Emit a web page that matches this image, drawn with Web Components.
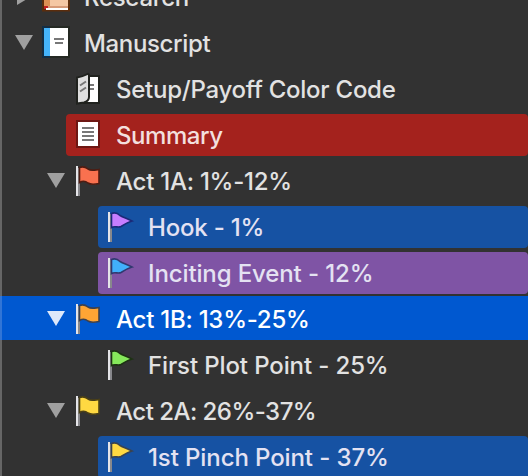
<!DOCTYPE html>
<html lang="en">
<head>
<meta charset="utf-8">
<title>Binder</title>
<style>
html, body { margin: 0; height: 100%; overflow: hidden; background: #323232; }
</style>
</head>
<body>
<binder-tree>
  <binder-item depth="0" state="closed" icon="research" spacing="-0.3">Research</binder-item>
  <binder-item depth="0" state="open" icon="manuscript" spacing="-0.35">Manuscript</binder-item>
  <binder-item depth="1" icon="folded" spacing="-0.25">Setup/Payoff Color Code</binder-item>
  <binder-item depth="1" icon="text" tint="#a4221d" spacing="-0.45">Summary</binder-item>
  <binder-item depth="1" state="open" icon="flag" color="#f9714f" edge="#4e1c12" spacing="-0.25">Act 1A: 1%-12%</binder-item>
  <binder-item depth="2" icon="pennant" color="#c77dff" edge="#1b2a78" tint="#1652a3" spacing="-0.2">Hook - 1%</binder-item>
  <binder-item depth="2" icon="pennant" color="#41b0fb" edge="#31396f" tint="#7f54a5" spacing="-0.12">Inciting Event - 12%</binder-item>
  <binder-item depth="1" state="open" icon="flag" color="#ffa534" edge="#3b4150" selected spacing="-0.25">Act 1B: 13%-25%</binder-item>
  <binder-item depth="2" icon="pennant" color="#86e95b" edge="#1d3213" spacing="-0.12">First Plot Point - 25%</binder-item>
  <binder-item depth="1" state="open" icon="flag" color="#ffd942" edge="#4b4016" spacing="-0.52">Act 2A: 26%-37%</binder-item>
  <binder-item depth="2" icon="pennant" color="#ffd942" edge="#3a4350" tint="#1652a3" spacing="-0.1">1st Pinch Point - 37%</binder-item>
</binder-tree>

<template id="tree-template">
<style>
:host {
  display: flex;
  flex-direction: column;
  gap: 2px;
  box-sizing: border-box;
  height: 476px;
  overflow: hidden;
  background: linear-gradient(to right, #666 2px, #323232 2px);
  color: #e2e2e2;
  font: 450 24px/44px Inter, "Liberation Sans", sans-serif;
}
/* the list is scrolled part way past its first row */
::slotted(:first-child) { margin-top: -26px; }
</style>
<slot></slot>
</template>

<template id="item-template">
<style>
:host {
  display: flex;
  flex: none;
  height: 44px;
  box-sizing: border-box;
  padding-left: calc(15px + var(--depth) * 32px);
}
:host([selected]) {
  color: #fff;
  background: linear-gradient(to right, #3175d6 2px, #0058d0 2px);
}
.toggle { flex: none; width: 19px; height: 44px; }
.bar {
  display: flex;
  flex: 1;
  height: 42px;
  margin-top: 2px;
  padding-left: 8px;
  gap: 14px;
  border-radius: 4px;
  background: var(--tint, transparent);
}
.icon { flex: none; width: 28px; height: 44px; margin-top: -2px; }
.icon svg, .toggle svg { display: block; overflow: visible; }
.label { white-space: pre; height: 44px; letter-spacing: var(--spacing, 0); }
:host([tint]) .label { color: #e4e2f2; }
:host([icon="text"]) .label { color: #f3dfde; }
</style>
<div class="toggle"></div>
<div class="bar">
  <div class="icon"></div>
  <div class="label"><slot></slot></div>
</div>
</template>

<script>
const toggles = {
  open: '<path d="M0 15h18l-9 15z"/>',
  closed: '<path d="M2 13v18l15-9z"/>'
}

const pole = '<path fill="#e4e4e8" d="M2 8h2v30H2z"/><path fill="#88888c" d="M4 10h2v28H4z"/>'

// all icons share a 28x44 box, the full height of a row
const icons = {
  research: `
    <path fill="#5b2c0c" d="M0 6h28v31.500H0z"/>
    <path fill="#dd9054" d="M2 8h6v25H2z"/>
    <path fill="#f5c7a4" d="M8 8h18v24H8z"/>
    <path fill="#d79a78" d="M6 32h20v2H6z"/>
    <path fill="#c01f20" d="M2 32h4v3H2z"/>
    <path fill="#fff" d="M4 34h22v2H4z"/>`,
  manuscript: `
    <path fill="#252923" d="M0 6h28v32H0z"/>
    <path fill="#132d43" d="M0 6h8v32H0z"/>
    <path fill="#45b4fb" d="M2 8h6v28H2z"/>
    <path fill="#fff" d="M8 8h18v28H8z"/>
    <path fill="#777" d="M12 18h10v2H12zM13 22h8v2h-8z"/>`,
  folded: `
    <path fill="#fff" stroke="#20221e" stroke-width="2" d="M10 10h15v27H10z"/>
    <path fill="#dedede" stroke="#20221e" stroke-width="2" d="M3 11.500Q9 10.500 12.500 8.500Q15 7 15 9V31Q15 35 10 36.500L3 37.500z"/>
    <path fill="none" stroke="#777" stroke-width="2" d="M6 19.500l6-4M6 25.500l6-4M16 19h4M16 23h4"/>`,
  text: `
    <path fill="#6e1713" d="M2 8h24v28H2z"/>
    <path fill="#fff" d="M4 10h20v24H4z"/>
    <path fill="#777" d="M8 15h12v2H8zM8 19h12v2H8zM8 23h12v2H8zM8 27h12v2H8z"/>`,
  flag: pole + `
    <path class="cloth" d="M5.500 9.500C9 8 11.500 9 14 11C17 13 20 12 25 11.500V25.500C20 26.500 17 27 14 25C11.500 23 9 22.500 5.500 24.500z"/>`,
  pennant: pole + `
    <path class="cloth" d="M5.500 9.500C9 8 11.500 9 14 11.500C17 13.500 21 14.500 26 17C21 18.500 18 20.500 15 22.500C12 24 9 21.500 5.500 23.500z"/>`
}

class BinderTree extends HTMLElement {
  constructor() {
    super()
    this.attachShadow({mode: 'open'})
    this.shadowRoot.appendChild(document.getElementById('tree-template').content.cloneNode(true))
  }
}

class BinderItem extends HTMLElement {
  constructor() {
    super()
    this.attachShadow({mode: 'open'})
    this.shadowRoot.appendChild(document.getElementById('item-template').content.cloneNode(true))
    this.dom = {
      toggle: this.shadowRoot.querySelector('.toggle'),
      icon: this.shadowRoot.querySelector('.icon')
    }
  }

  connectedCallback() {
    this.style.setProperty('--depth', this.getAttribute('depth'))
    this.style.setProperty('--spacing', this.getAttribute('spacing') + 'px')
    if (this.hasAttribute('tint')) this.style.setProperty('--tint', this.getAttribute('tint'))

    const state = this.getAttribute('state')
    if (state) {
      const fill = this.hasAttribute('selected') ? '#dde8fa' : '#a0a0a0'
      this.dom.toggle.innerHTML = `<svg width="19" height="44" fill="${fill}">${toggles[state]}</svg>`
    }

    this.dom.icon.innerHTML = `<svg width="28" height="44">${icons[this.getAttribute('icon')]}</svg>`
    const cloth = this.dom.icon.querySelector('.cloth')
    if (cloth) {
      cloth.setAttribute('fill', this.getAttribute('color'))
      cloth.setAttribute('stroke', this.getAttribute('edge'))
      cloth.setAttribute('stroke-width', 1.6)
    }
  }
}

customElements.define('binder-tree', BinderTree)
customElements.define('binder-item', BinderItem)
</script>
</body>
</html>
